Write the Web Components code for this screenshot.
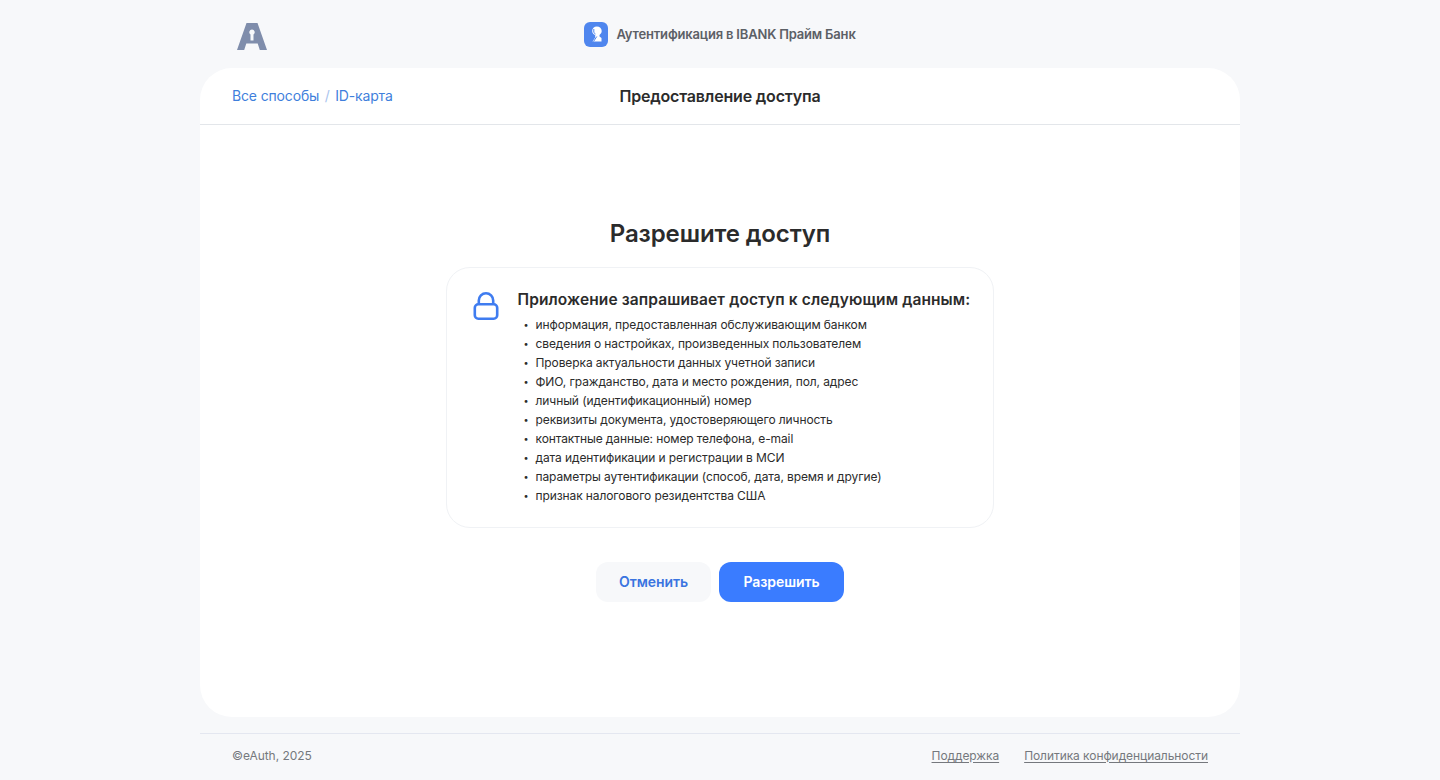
<!DOCTYPE html>
<html lang="ru"><head><meta charset="utf-8"><title>eAuth</title>
<style>
html,body{margin:0;padding:0;background:#f7f8fa;height:780px;overflow:hidden}
body{font-family:Inter,"Noto Sans",sans-serif;color:#2b2b2b}
</style></head><body>
<auth-page>
  <auth-header slot="header" text="Аутентификация в IBANK Прайм Банк"></auth-header>
  <auth-card>
    <crumb-bar slot="bar" title-text="Предоставление доступа"></crumb-bar>
    <h-title>Разрешите доступ</h-title>
    <scope-card heading="Приложение запрашивает доступ к следующим данным:">
      <scope-item>информация, предоставленная обслуживающим банком</scope-item>
      <scope-item>сведения о настройках, произведенных пользователем</scope-item>
      <scope-item>Проверка актуальности данных учетной записи</scope-item>
      <scope-item>ФИО, гражданство, дата и место рождения, пол, адрес</scope-item>
      <scope-item>личный (идентификационный) номер</scope-item>
      <scope-item>реквизиты документа, удостоверяющего личность</scope-item>
      <scope-item>контактные данные: номер телефона, e-mail</scope-item>
      <scope-item>дата идентификации и регистрации в МСИ</scope-item>
      <scope-item>параметры аутентификации (способ, дата, время и другие)</scope-item>
      <scope-item>признак налогового резидентства США</scope-item>
    </scope-card>
    <action-row>
      <ui-button kind="secondary">Отменить</ui-button>
      <ui-button kind="primary">Разрешить</ui-button>
    </action-row>
  </auth-card>
  <auth-footer slot="footer"></auth-footer>
</auth-page>
<script>
function def(name,html){
  customElements.define(name,class extends HTMLElement{
    connectedCallback(){
      if(this.shadowRoot)return;
      const r=this.attachShadow({mode:'open'});
      r.innerHTML=typeof html==='function'?html(this):html;
    }
  });
}
def('auth-page',`<style>:host{display:flex;flex-direction:column;width:1040px;height:780px;margin:0 auto}</style><slot name="header"></slot><slot></slot><slot name="footer"></slot>`);
def('auth-header',el=>`<style>
:host{display:flex;height:68px;flex:none;align-items:center;justify-content:center;position:relative}
.logo{position:absolute;left:37px;top:23px;width:30px;height:27px;display:block}
.t{display:flex;align-items:center;gap:8px;font-size:13px;font-weight:600;color:#5c6066;letter-spacing:-.18px;line-height:16px}
.i{width:24px;height:25px;display:block;margin-bottom:-1px}
</style>
<svg class="logo" viewBox="0 0 30 27"><path fill-rule="evenodd" fill="#7f8dab" d="M9.500 0H20.500L30 27H22.800L20.700 20.500H9.300L7.200 27H0ZM15 6.500a2.700 2.700 0 0 0-1.500 4.950V17.500h3V11.450A2.700 2.700 0 0 0 15 6.500Z"/></svg>
<div class="t"><svg class="i" viewBox="0 0 24 25"><rect width="24" height="25" rx="6" fill="#4f86ee"/><path fill="#fff" d="M12.800 4.500c2.900 0 4.900 2 4.900 4.600 0 1.700-.9 3-2.200 3.800v1.500l2 1.500v3.600H8.500l2.700-4V13c-1.600-.6-3-2-3-4 0-2.700 2-4.500 4.600-4.500Z"/><path stroke="#4f86ee" stroke-width="1" fill="none" d="M9.800 7v3.500l1.700 1.500M9.500 19.500l3.300-5"/></svg><span>${el.getAttribute('text')}</span></div>`);
def('auth-card',`<style>
:host{display:flex;flex-direction:column;align-items:center;height:649px;flex:none;background:#fff;border-radius:32px;overflow:hidden}
.b{display:flex;flex-direction:column;align-items:center;padding-top:94px}
</style><slot name="bar"></slot><div class="b"><slot></slot></div>`);
def('crumb-bar',el=>`<style>
:host{display:grid;grid-template-columns:1fr auto 1fr;align-items:center;box-sizing:border-box;width:100%;height:57px;padding:0 32px 1px;border-bottom:1px solid #e3e6ea}
.c{font-size:14px;letter-spacing:-.15px;color:#3f7fdc;display:flex;gap:5.500px;line-height:20px;white-space:nowrap}
.s{color:#a9c4ee}
.h{font-size:16px;font-weight:600;letter-spacing:-.18px;color:#2b2b2b;line-height:20px}
</style><div class="c"><span>Все способы</span><span class="s">/</span><span>ID-карта</span></div><div class="h">${el.getAttribute('title-text')}</div><div></div>`);
def('h-title',`<style>:host{display:block;font-size:24px;font-weight:600;letter-spacing:-.12px;line-height:30px;color:#2b2b2b;margin:0 0 18px}</style><slot></slot>`);
def('scope-card',el=>`<style>
:host{display:flex;box-sizing:border-box;width:548px;height:261px;border:1px solid #f0f2f5;border-radius:24px;padding:22px 22px 0 25.500px;gap:19px}
svg{width:26px;height:30px;flex:none;display:block;margin-top:1px}
h3{margin:0 0 5px;font-size:15.500px;letter-spacing:.11px;font-weight:600;line-height:20px;color:#2b2b2b;white-space:nowrap}
ul{margin:0;padding:0;display:flex;flex-direction:column}
</style><svg viewBox="0 0 26 30" fill="none" stroke="#3f7cf0" stroke-width="2.600"><rect x="1.800" y="13.300" width="22.400" height="14.400" rx="3.500"/><path d="M5.800 13V9.500a7.200 7.200 0 0 1 14.400 0V13"/></svg>
<div><h3>${el.getAttribute('heading')}</h3><ul><slot></slot></ul></div>`);
def('scope-item',`<style>
:host{display:flex;font-size:12px;letter-spacing:-.1px;line-height:19px;color:#2b2b2b;white-space:nowrap;padding-left:6px}
i{width:12px;flex:none;font-style:normal;font-size:9px}
</style><i>•</i><span><slot></slot></span>`);
def('action-row',`<style>:host{display:flex;gap:8px;margin-top:34px}</style><slot></slot>`);
def('ui-button',el=>{
 const p=el.getAttribute('kind')==='primary';
 return `<style>
:host{display:flex;align-items:center;justify-content:center;height:40px;box-sizing:border-box;padding-bottom:2px;border-radius:12px;font-size:14px;font-weight:600;letter-spacing:-.06px;width:${p?125:115}px;background:${p?'#3a7cff':'#f7f8fa'};color:${p?'#fff':'#3a74e0'}}
</style><slot></slot>`});
def('auth-footer',`<style>
:host{display:flex;justify-content:space-between;align-items:center;box-sizing:border-box;height:45px;margin-top:16px;border-top:1px solid #e4e7f0;padding:0 32px 2px;font-size:12px;letter-spacing:-.05px;color:#75787d;flex:none}
nav{display:flex;gap:25px;letter-spacing:-.07px}
a{color:#75787d;text-decoration:underline;text-underline-offset:2px}
</style><span>©eAuth, 2025</span><nav><a>Поддержка</a><a>Политика конфиденциальности</a></nav>`);
</script>
</body></html>
